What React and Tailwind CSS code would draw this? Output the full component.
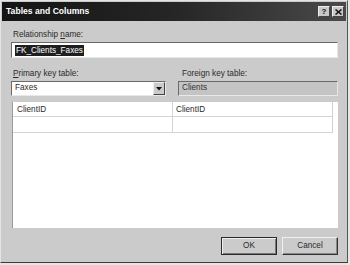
export default function App() {
  const font = { fontFamily: '"Liberation Sans", Arial, sans-serif' };
  return (
    <div className="w-[350px] h-[265px] bg-[#e6e6e6] overflow-hidden" style={font}>
      <div className="w-[348px] h-[263px] bg-[#cbcbcb] border border-t-[#e4e4e4] border-l-[#e4e4e4] border-r-[#555] border-b-[#3c3c3c] flex flex-col text-[#2a2a2a]">
        {/* title bar */}
        <div className="h-[19px] mx-[1px] mt-[1px] bg-gradient-to-r from-[#141414] via-[#262626] to-[#4a4a4a] flex items-center justify-between pl-[4px] pr-[2px]">
          <span className="text-white font-bold text-[8.6px] leading-none tracking-[0px]">Tables and Columns</span>
          <div className="flex gap-[1px]">
            <div className="w-[12px] h-[11px] bg-[#c9c9c9] border border-t-[#eee] border-l-[#eee] border-r-[#444] border-b-[#444] flex items-center justify-center text-[8px] font-bold leading-none text-[#111]">?</div>
            <div className="w-[12px] h-[11px] bg-[#c9c9c9] border border-t-[#eee] border-l-[#eee] border-r-[#444] border-b-[#444] flex items-center justify-center ml-[1px]">
              <svg width="7" height="6" viewBox="0 0 7 6"><path d="M0.5 0.5 L6.5 5.5 M6.5 0.5 L0.5 5.5" stroke="#111" strokeWidth="1.5" /></svg>
            </div>
          </div>
        </div>
        {/* body */}
        <div className="flex flex-col pl-[10px] pr-[9px]">
          <div className="mt-[8px] h-[11px] leading-[11px] text-[8.2px] pl-[2px]">
            Relationship <span className="underline">n</span>ame:
          </div>
          <div className="mt-[2px] h-[16px] w-[327px] bg-white border border-t-[#6a6a6a] border-l-[#6a6a6a] border-r-[#e8e8e8] border-b-[#e8e8e8] flex items-center pl-[3px]">
            <span className="bg-[#1e1e1e] text-white text-[8.2px] leading-[11px] px-[1px]">FK_Clients_Faxes</span>
          </div>
          <div className="mt-[10px] flex">
            <div className="w-[154px] h-[11px] leading-[11px] text-[8.2px] pl-[2px]">
              <span className="underline">P</span>rimary key table:
            </div>
            <div className="ml-[13px] h-[11px] leading-[11px] text-[8.2px] pl-[4px]">Foreign key table:</div>
          </div>
          <div className="mt-[2px] flex">
            <div className="w-[155px] h-[15px] bg-white border border-t-[#6a6a6a] border-l-[#6a6a6a] border-r-[#e8e8e8] border-b-[#e8e8e8] flex items-center justify-between">
              <span className="text-[8.2px] leading-none pl-[3px]">Faxes</span>
              <div className="w-[12px] h-[13px] bg-[#cbcbcb] border border-t-[#eee] border-l-[#eee] border-r-[#444] border-b-[#444] flex items-center justify-center">
                <svg width="6" height="4" viewBox="0 0 6 4"><path d="M0 0 H6 L3 3.5 Z" fill="#111" /></svg>
              </div>
            </div>
            <div className="ml-[12px] w-[160px] h-[15px] bg-[#c4c4c4] border border-t-[#6a6a6a] border-l-[#6a6a6a] border-r-[#e8e8e8] border-b-[#e8e8e8] flex items-center">
              <span className="text-[8.2px] leading-none pl-[3px] text-[#333]">Clients</span>
            </div>
          </div>
          {/* grid */}
          <div className="mt-[6px] ml-[1px] w-[326px] h-[126px] bg-white border-l border-[#9a9a9a]">
            <div className="w-[320px] border-r border-[#d0d0d0]">
              <div className="flex h-[15px] border-b border-[#d4d4d4]">
                <div className="w-[160px] border-r border-[#d4d4d4] text-[8.2px] leading-[15px] pl-[4px]">ClientID</div>
                <div className="flex-1 text-[8.2px] leading-[15px] pl-[3px]">ClientID</div>
              </div>
              <div className="flex h-[16px] border-b border-[#d4d4d4]">
                <div className="w-[160px] border-r border-[#d4d4d4]"></div>
                <div className="flex-1"></div>
              </div>
            </div>
          </div>
          {/* buttons */}
          <div className="mt-[9px] flex justify-end gap-[5px] pr-[0px]">
            <div className="w-[56px] h-[18px] bg-[#cbcbcb] border border-[#2a2a2a] shadow-[inset_1px_1px_0_#f0f0f0,inset_-1px_-1px_0_#777] flex items-center justify-center text-[8.2px]">OK</div>
            <div className="w-[56px] h-[18px] bg-[#cbcbcb] border border-t-[#f0f0f0] border-l-[#f0f0f0] border-r-[#333] border-b-[#333] shadow-[inset_-1px_-1px_0_#888] flex items-center justify-center text-[8.2px]">Cancel</div>
          </div>
        </div>
      </div>
    </div>
  );
}
